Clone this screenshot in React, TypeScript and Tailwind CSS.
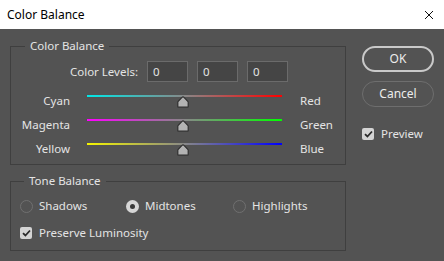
import React from "react";

const font = { fontFamily: '"Noto Sans", "Open Sans", Arial, sans-serif' };

const Thumb = () => (
	<svg width="12" height="12" viewBox="0 0 12 12" className="absolute left-[90px] top-[7px]">
		<path
			d="M6 0.8 C6.4 0.8 6.7 1 7 1.3 L10.8 5.4 C11 5.6 11.2 5.9 11.2 6.2 L11.2 10.5 C11.2 10.9 10.9 11.2 10.5 11.2 L1.5 11.2 C1.1 11.2 0.8 10.9 0.8 10.5 L0.8 6.2 C0.8 5.9 1 5.6 1.2 5.4 L5 1.3 C5.3 1 5.6 0.8 6 0.8 Z"
			fill="#b3b3b3"
			stroke="#2f2f2f"
			strokeWidth="1.2"
		/>
	</svg>
);

const SliderRow = ({ left, right, gradient }: { left: string; right: string; gradient: string }) => (
	<div className="flex h-[24px] items-center">
		<span className="w-[59px] text-right">{left}</span>
		<div className="relative ml-[17px] h-[24px] w-[195px]">
			<div className={`absolute left-0 top-[6px] h-[2px] w-full ${gradient}`} />
			<Thumb />
		</div>
		<span className="ml-[18px]">{right}</span>
	</div>
);

const Check = () => (
	<span className="flex h-[12px] w-[12px] items-center justify-center rounded-[2px] bg-[#d4d4d4]">
		<svg width="9" height="8" viewBox="0 0 9 8">
			<path d="M1 4.2 L3.4 6.5 L8 1.5" fill="none" stroke="#2a2a2a" strokeWidth="1.8" />
		</svg>
	</span>
);

const Radio = ({ label, checked, width }: { label: string; checked?: boolean; width: string }) => (
	<div className={`flex items-center gap-[6px] ${width}`}>
		{checked ? (
			<span className="flex h-[13px] w-[13px] items-center justify-center rounded-full bg-[#d6d6d6]">
				<span className="h-[5px] w-[5px] rounded-full bg-[#383838]" />
			</span>
		) : (
			<span className="h-[13px] w-[13px] rounded-full border border-[#707070]" />
		)}
		<span>{label}</span>
	</div>
);

const NumInput = () => (
	<div className="flex h-[21px] w-[41px] items-center border border-[#6b6b6b] bg-[#454545] pl-[5px]">
		0
	</div>
);

export default function App() {
	return (
		<div className="h-[261px] w-[444px] overflow-hidden bg-[#535353] text-[11.5px] leading-[16px] text-[#e4e4e4]" style={font}>
			<div className="flex h-[29px] items-center justify-between bg-white pl-[7px] pr-[10px] text-[12px] text-black">
				<span>Color Balance</span>
				<svg width="10" height="10" viewBox="0 0 10 10">
					<path d="M1 1 L9 9 M9 1 L1 9" stroke="#111" strokeWidth="1" />
				</svg>
			</div>

			<div className="flex pl-[10px] pt-[9px]">
				<div className="flex flex-col">
					<fieldset className="w-[336px] border border-[#3f3f3f] pb-[3px]">
						<legend className="ml-[14px] px-[5px]">Color Balance</legend>
						<div className="mt-[7px] flex h-[21px] items-center">
							<span className="w-[127px] text-right">Color Levels:</span>
							<div className="ml-[9px] flex gap-[9px]">
								<NumInput />
								<NumInput />
								<NumInput />
							</div>
						</div>
						<div className="mt-[7px] flex flex-col">
							<SliderRow left="Cyan" right="Red" gradient="bg-[linear-gradient(to_right,#00e8e8,#888888_50%,#ff0000)]" />
							<SliderRow left="Magenta" right="Green" gradient="bg-[linear-gradient(to_right,#ff00ff,#888888_50%,#00ff00)]" />
							<SliderRow left="Yellow" right="Blue" gradient="bg-[linear-gradient(to_right,#f5f500,#888888_50%,#0000ff)]" />
						</div>
					</fieldset>

					<fieldset className="mt-[8px] w-[336px] border border-[#3f3f3f] pb-[9px]">
						<legend className="ml-[13px] px-[5px]">Tone Balance</legend>
						<div className="ml-[9px] mt-[9px] flex h-[16px] items-center">
							<Radio label="Shadows" width="w-[106px]" />
							<Radio label="Midtones" checked width="w-[107px]" />
							<Radio label="Highlights" width="w-[100px]" />
						</div>
						<div className="ml-[9px] mt-[11px] flex h-[16px] items-center gap-[7px]">
							<Check />
							<span>Preserve Luminosity</span>
						</div>
					</fieldset>
				</div>

				<div className="ml-[16px] flex flex-col pt-[8px]">
					<button className="flex h-[26px] w-[72px] items-center justify-center rounded-full border-2 border-[#c9c9c9] text-[12px] text-[#ececec]">
						OK
					</button>
					<button className="mt-[9px] flex h-[26px] w-[72px] items-center justify-center rounded-full border-[1.5px] border-[#6e6e6e] text-[12px] text-[#ececec]">
						Cancel
					</button>
					<div className="mt-[19px] flex items-center gap-[7px]">
						<Check />
						<span>Preview</span>
					</div>
				</div>
			</div>
		</div>
	);
}
